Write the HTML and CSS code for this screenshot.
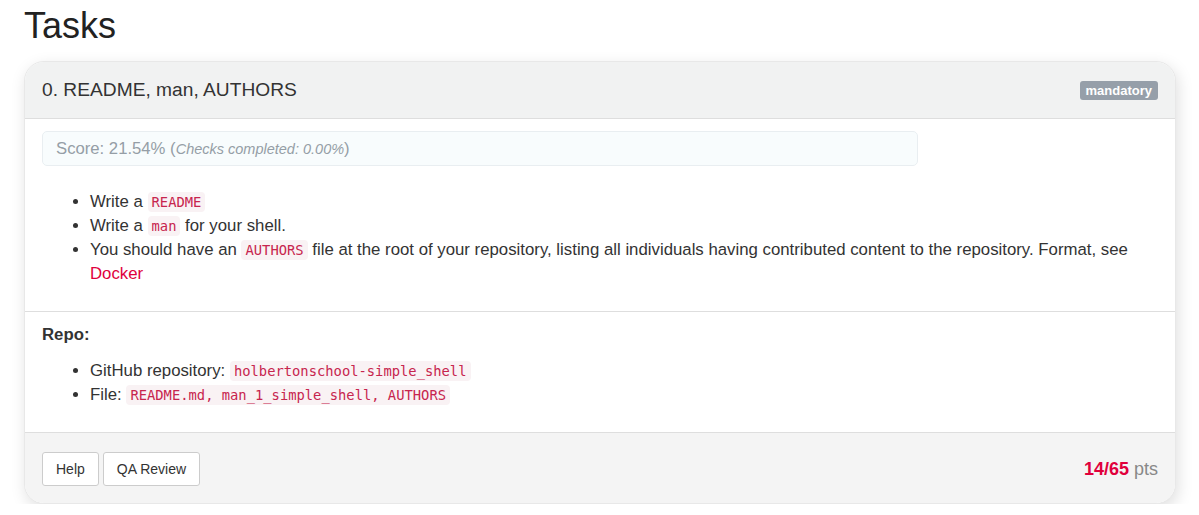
FILE: index.html
```html
<!DOCTYPE html>
<html lang="en">
<head>
<meta charset="utf-8">
<title>Tasks</title>
<link rel="stylesheet" href="styles.css">
</head>
<body>
<div class="page">
  <h1 class="page-title">Tasks</h1>
  <div class="task-card">
    <div class="task-header">
      <h3 class="task-title">0. README, man, AUTHORS</h3>
      <span class="badge">mandatory</span>
    </div>
    <div class="task-body">
      <div class="score">Score: 21.54% (<em>Checks completed: 0.00%</em>)</div>
      <ul class="list">
        <li>Write a <code>README</code></li>
        <li>Write a <code>man</code> for your shell.</li>
        <li>You should have an <code>AUTHORS</code> file at the root of your repository, listing all individuals having contributed content to the repository. Format, see <a href="#" class="link">Docker</a></li>
      </ul>
    </div>
    <div class="task-repo">
      <p class="repo-label">Repo:</p>
      <ul class="list">
        <li>GitHub repository: <code>holbertonschool-simple_shell</code></li>
        <li>File: <code>README.md, man_1_simple_shell, AUTHORS</code></li>
      </ul>
    </div>
    <div class="task-footer">
      <div class="buttons">
        <button class="btn">Help</button>
        <button class="btn">QA Review</button>
      </div>
      <div class="points"><span class="pts-num">14/65</span> pts</div>
    </div>
  </div>
</div>
</body>
</html>
```

FILE: styles.css
```css
* { box-sizing: border-box; }
html, body { margin: 0; padding: 0; background: #fff; }
body {
  font-family: "Liberation Sans", Arial, sans-serif;
  font-size: 16.8px;
  color: #333;
}
.page { padding: 6px 23px 0 24px; }
.page-title {
  margin: 0;
  font-size: 36px;
  line-height: 40px;
  font-weight: 400;
  color: #222;
}
.task-card {
  margin-top: 15px;
  border: 1px solid #e8e8e8;
  border-radius: 20px;
  box-shadow: 2px 5px 16px rgba(0,0,0,0.13);
  overflow: hidden;
  background: #fff;
}
.task-header {
  display: flex;
  align-items: center;
  justify-content: space-between;
  height: 57px;
  padding: 0 17px;
  background: #f1f2f2;
  border-bottom: 1px solid #dedede;
}
.task-title {
  margin: 0;
  font-size: 19.2px;
  font-weight: 400;
  color: #333;
}
.badge {
  background: #969fa9;
  color: #fff;
  font-weight: 700;
  font-size: 13px;
  line-height: 19px;
  padding: 0 6px;
  border-radius: 3px;
}
.task-body {
  padding: 12px 17px 25px;
  border-bottom: 1px solid #dedede;
}
.score {
  width: 876px;
  height: 35px;
  line-height: 33px;
  padding: 0 13px;
  border: 1px solid #e9eef1;
  border-radius: 5px;
  background: #f8fcfd;
  color: #959ea6;
  font-size: 16.7px;
}
.score em { font-size: 14.5px; }
.list {
  margin: 24px 0 0;
  padding-left: 48px;
  line-height: 24px;
}
code {
  font-family: "DejaVu Sans Mono", "Liberation Mono", monospace;
  font-size: 13.8px;
  line-height: 18px;
  padding: 2px 4px;
  color: #c7254e;
  background: #f9f2f4;
  border-radius: 4px;
}
.link { color: #e0003c; text-decoration: none; }
.task-repo {
  padding: 11px 17px 25px;
  border-bottom: 1px solid #dedede;
}
.repo-label {
  margin: 0;
  font-weight: 700;
  line-height: 24px;
}
.task-repo .list { margin-top: 12px; }
.task-footer {
  display: flex;
  align-items: center;
  justify-content: space-between;
  padding: 19px 17px 17px;
  background: #f4f4f4;
}
.buttons { display: flex; gap: 4px; }
.btn {
  font-family: "Liberation Sans", Arial, sans-serif;
  font-size: 14px;
  color: #333;
  height: 34px;
  padding: 0 13px;
  border: 1px solid #ccc;
  border-radius: 3px;
  background: #fff;
}
.points {
  font-size: 18px;
  color: #888;
}
.pts-num { color: #e0003c; font-weight: 700; }
```
